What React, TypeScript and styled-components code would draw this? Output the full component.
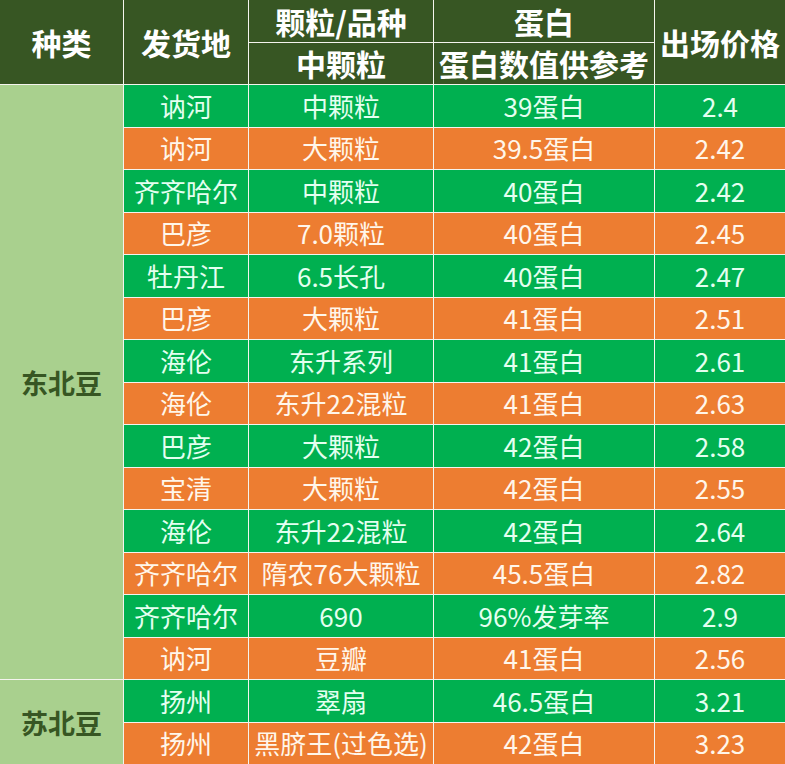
import React from "react";
import styled, { createGlobalStyle } from "styled-components";

const Global = createGlobalStyle`
  html, body { margin: 0; padding: 0; background: #ffffff; }
  body { font-family: "Noto Sans CJK SC", "Noto Sans", sans-serif; }
`;

const Table = styled.div`
  display: grid;
  grid-template-columns: 123px 124px 184px 220px 130px;
  grid-template-rows: repeat(18, 1fr);
  gap: 1px;
  width: 785px;
  height: 764px;
  background: #f4f4ee;
  overflow: hidden;
`;

const Head = styled.div<{ $rows?: number }>`
  grid-row: span ${(p) => p.$rows ?? 1};
  background: #375623;
  color: #ffffff;
  font-weight: 700;
  font-size: 30px;
  display: flex;
  align-items: center;
  justify-content: center;
  white-space: nowrap;
  line-height: 1;
`;

const Group = styled.div<{ $rows: number }>`
  grid-row: span ${(p) => p.$rows};
  background: #a9d08e;
  color: #375623;
  font-weight: 700;
  font-size: 27px;
  display: flex;
  align-items: center;
  justify-content: center;
  line-height: 1;
`;

const Cell = styled.div<{ $tone: "green" | "orange" }>`
  background: ${(p) => (p.$tone === "green" ? "#00b050" : "#ed7d31")};
  color: ${(p) => (p.$tone === "green" ? "#e4fff0" : "#fff6ea")};
  font-size: 26px;
  display: flex;
  align-items: center;
  justify-content: center;
  white-space: nowrap;
  line-height: 1;
`;

type Row = [string, string, string, string];

const north: Row[] = [
  ["讷河", "中颗粒", "39蛋白", "2.4"],
  ["讷河", "大颗粒", "39.5蛋白", "2.42"],
  ["齐齐哈尔", "中颗粒", "40蛋白", "2.42"],
  ["巴彦", "7.0颗粒", "40蛋白", "2.45"],
  ["牡丹江", "6.5长孔", "40蛋白", "2.47"],
  ["巴彦", "大颗粒", "41蛋白", "2.51"],
  ["海伦", "东升系列", "41蛋白", "2.61"],
  ["海伦", "东升22混粒", "41蛋白", "2.63"],
  ["巴彦", "大颗粒", "42蛋白", "2.58"],
  ["宝清", "大颗粒", "42蛋白", "2.55"],
  ["海伦", "东升22混粒", "42蛋白", "2.64"],
  ["齐齐哈尔", "隋农76大颗粒", "45.5蛋白", "2.82"],
  ["齐齐哈尔", "690", "96%发芽率", "2.9"],
  ["讷河", "豆瓣", "41蛋白", "2.56"],
];

const south: Row[] = [
  ["扬州", "翠扇", "46.5蛋白", "3.21"],
  ["扬州", "黑脐王(过色选)", "42蛋白", "3.23"],
];

const renderRows = (rows: Row[], label: string, key: string) => {
  const out: React.ReactNode[] = [];
  rows.forEach((r, i) => {
    const tone = i % 2 === 0 ? "green" : "orange";
    if (i === 0) {
      out.push(
        <Group key={`${key}-g`} $rows={rows.length}>
          {label}
        </Group>
      );
    }
    r.forEach((t, j) => {
      out.push(
        <Cell key={`${key}-${i}-${j}`} $tone={tone}>
          {t}
        </Cell>
      );
    });
  });
  return out;
};

export default function App() {
  return (
    <>
      <Global />
      <Table>
        <Head $rows={2}>种类</Head>
        <Head $rows={2}>发货地</Head>
        <Head>颗粒/品种</Head>
        <Head>蛋白</Head>
        <Head $rows={2}>出场价格</Head>
        <Head>中颗粒</Head>
        <Head>蛋白数值供参考</Head>
        {renderRows(north, "东北豆", "n")}
        {renderRows(south, "苏北豆", "s")}
      </Table>
    </>
  );
}
